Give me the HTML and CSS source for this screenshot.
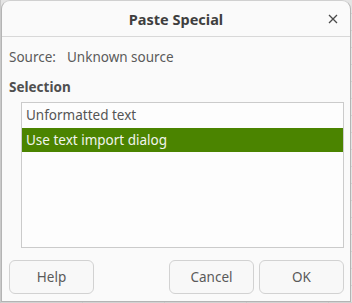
FILE: index.html
```html
<!doctype html>
<html lang="en">
<head>
    <meta charset="UTF-8">
    <title>Paste Special</title>
    <link rel="stylesheet" href="styles.css">
</head>
<body>
    <div class="dialog">
        <div class="titlebar">
            <span class="title">Paste Special</span>
            <span class="close">
                <svg width="10" height="10" viewBox="0 0 10 10"><path d="M1 1L9 9M9 1L1 9" stroke="#4a4a4a" stroke-width="1.3"/></svg>
            </span>
        </div>
        <div class="content">
            <div class="source">
                <span class="source-label">Source:</span>
                <span>Unknown source</span>
            </div>
            <div class="section">Selection</div>
            <ul class="list">
                <li>Unformatted text</li>
                <li class="selected">Use text import dialog</li>
            </ul>
            <div class="buttons">
                <button>Help</button>
                <span class="spacer"></span>
                <button>Cancel</button>
                <button>OK</button>
            </div>
        </div>
    </div>
</body>
</html>
```

FILE: styles.css
```css
*{
    margin: 0;
    padding: 0;
    box-sizing: border-box;
    list-style: none;
}
body{
    background-color: #e4e4e4;
    background-image:
        linear-gradient(to right, #c9c9c9 1px, transparent 1px),
        linear-gradient(to bottom, #d2d2d2 1px, transparent 1px);
    background-size: 82px 17px;
    background-position: 0 13px;
    font-family: "Noto Sans", sans-serif;
    font-size: 13.5px;
    color: #5a5a5a;
    width: 352px;
    height: 303px;
    overflow: hidden;
}
.dialog{
    width: 350px;
    height: 302px;
    margin-left: 1px;
    background: #fafafa;
    border: 1px solid #b4b4b4;
    border-top-color: #d0d0d0;
    border-radius: 9px 9px 0 0;
    display: flex;
    flex-direction: column;
}
.titlebar{
    height: 37px;
    border-bottom: 1px solid #d8d8d8;
    display: flex;
    align-items: center;
    justify-content: center;
    position: relative;
}
.title{
    font-weight: bold;
    font-size: 14.5px;
    color: #3f3f3f;
}
.close{
    position: absolute;
    right: 12px;
    top: 13px;
    width: 10px;
    height: 10px;
    display: flex;
}
.content{
    flex: 1;
    display: flex;
    flex-direction: column;
    padding: 9px 6px 7px 7px;
}
.source{
    display: flex;
    height: 22px;
    align-items: center;
}
.source-label{
    width: 58px;
}
.section{
    margin-top: 9px;
    font-weight: bold;
    color: #4f4f4f;
    height: 20px;
    line-height: 20px;
}
.list{
    margin: 5px 0 0 12px;
    height: 146px;
    background: #fdfdfd;
    border: 1px solid #cbcbcb;
}
.list li{
    height: 25px;
    line-height: 24px;
    padding-left: 4px;
    color: #555;
}
.list li.selected{
    height: 24px;
    background: #4b8400;
    color: #f2f5ee;
}
.buttons{
    margin-top: 12px;
    display: flex;
    gap: 5px;
}
.spacer{
    flex: 1;
}
button{
    width: 85px;
    height: 34px;
    font-family: "Noto Sans", sans-serif;
    font-size: 13.5px;
    color: #5a5a5a;
    background: #f8f8f8;
    border: 1px solid #d2d2d2;
    border-radius: 6px;
}
```
